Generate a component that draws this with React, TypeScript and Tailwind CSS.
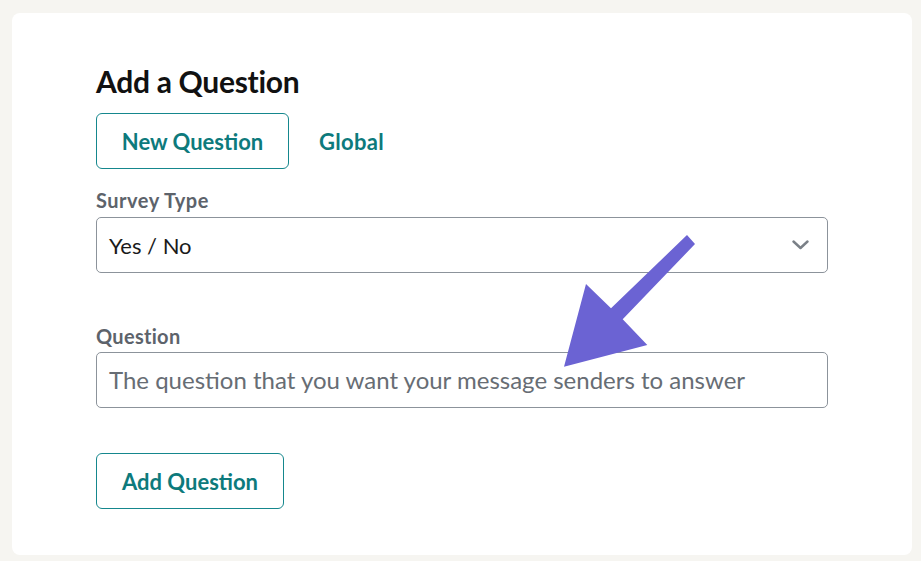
import React from "react";

export default function App() {
  return (
    <div className="w-[921px] h-[561px] bg-[#f6f5f1] pt-[13px] pl-[12px] overflow-hidden relative" style={{ fontFamily: "Lato, 'Noto Sans', sans-serif" }}>
      <div className="w-[900px] h-[542px] bg-white rounded-[8px] pl-[84px] pt-[50px]">
        <h2 className="text-[30px] leading-[36px] font-bold text-[#111] tracking-[-0.3px]">Add a Question</h2>
        <div className="flex items-center mt-[14px] h-[56px]">
          <button className="h-[56px] w-[193px] border border-[#15878d] rounded-[6px] text-[#0d7a7c] text-[22px] font-bold">New Question</button>
          <span className="ml-[30px] text-[22px] font-bold text-[#0d7a7c] tracking-[0.3px]">Global</span>
        </div>
        <div className="mt-[20px] text-[20px] leading-[22px] font-bold text-[#5d636b] tracking-[0.5px]">Survey Type</div>
        <div className="mt-[6px] w-[732px] h-[56px] border border-[#8c939b] rounded-[5px] flex items-center justify-between pl-[12px] pr-[18px]">
          <span className="text-[22px] text-[#1a1a1a]">Yes / No</span>
          <svg width="17" height="10" viewBox="0 0 17 10" fill="none">
            <path d="M1.5 1.5 L8.5 8 L15.5 1.5" stroke="#7a8087" strokeWidth="2.4" strokeLinecap="round" strokeLinejoin="round" />
          </svg>
        </div>
        <div className="mt-[52px] text-[20px] leading-[22px] font-bold text-[#5d636b] tracking-[0.3px]">Question</div>
        <div className="mt-[5px] w-[732px] h-[56px] border border-[#8c939b] rounded-[5px] flex items-center pl-[12px]">
          <span className="text-[24px] text-[#676d74]">The question that you want your message senders to answer</span>
        </div>
        <button className="mt-[45px] h-[56px] w-[188px] border border-[#15878d] rounded-[6px] text-[#0d7a7c] text-[22px] font-bold">Add Question</button>
      </div>
      <svg className="absolute left-0 top-0" width="921" height="561" viewBox="0 0 921 561">
        <polygon points="687,235 695,244 622.7,319.3 647.3,345 564,366.7 586,284 611,308.3" fill="#6b63d3" />
      </svg>
    </div>
  );
}
